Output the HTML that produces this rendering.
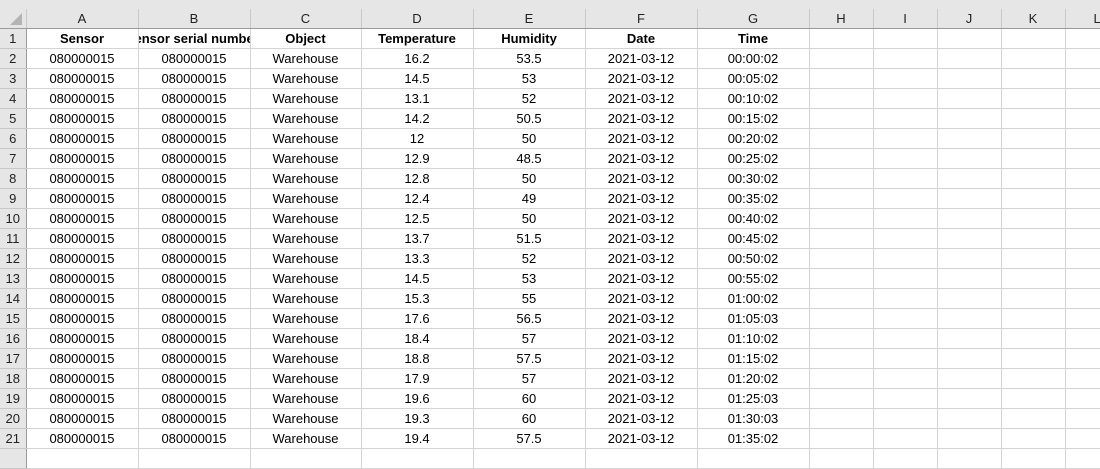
<!DOCTYPE html>
<html><head><style>
body{margin:0;width:1100px;height:451px;overflow:hidden;background:#fff;font-family:"Liberation Sans",Arial,sans-serif;}
.top{position:absolute;left:0;top:0;width:1100px;height:9px;background:#e6e6e6;}
table{position:absolute;left:0;top:9px;width:1105px;border-collapse:collapse;table-layout:fixed;font-size:13px;color:#000;}
td{height:19px;padding:0;text-align:center;border-right:1px solid #d4d4d4;border-bottom:1px solid #d4d4d4;white-space:nowrap;overflow:hidden;line-height:19px;}
tr.h td{background:#e6e6e6;border-right:1px solid #c8c8c8;border-bottom:1px solid #9b9b9b;color:#222;height:19px;}
td.rh{background:#e6e6e6;border-right:1px solid #9b9b9b;border-bottom:1px solid #c8c8c8;color:#222;text-align:center;}
tr.b td{font-weight:bold;}
tr.b td.rh{font-weight:normal;}
.clip{position:relative;}
.clip span{position:absolute;left:-4px;top:0;width:130px;text-align:left;}
</style></head><body>
<div class="top"></div>
<table>
<colgroup><col style="width:26px"><col style="width:112px"><col style="width:112px"><col style="width:111px"><col style="width:112px"><col style="width:112px"><col style="width:112px"><col style="width:112px"><col style="width:64px"><col style="width:64px"><col style="width:64px"><col style="width:64px"><col style="width:40px"></colgroup>
<tr class="h"><td class="rh" style="border-bottom:1px solid #9b9b9b"><svg width="26" height="19" style="display:block"><polygon points="22,4 22,16 10,16" fill="#b4b4b4"/></svg></td><td>A</td><td>B</td><td>C</td><td>D</td><td>E</td><td>F</td><td>G</td><td>H</td><td>I</td><td>J</td><td>K</td><td style="text-align:left;padding-left:28px">L</td></tr>
<tr class="b"><td class="rh">1</td><td>Sensor</td><td class="clip"><span>ensor serial number</span></td><td>Object</td><td>Temperature</td><td>Humidity</td><td>Date</td><td>Time</td><td></td><td></td><td></td><td></td><td></td></tr>
<tr><td class="rh">2</td><td>080000015</td><td>080000015</td><td>Warehouse</td><td>16.2</td><td>53.5</td><td>2021-03-12</td><td>00:00:02</td><td></td><td></td><td></td><td></td><td></td></tr>
<tr><td class="rh">3</td><td>080000015</td><td>080000015</td><td>Warehouse</td><td>14.5</td><td>53</td><td>2021-03-12</td><td>00:05:02</td><td></td><td></td><td></td><td></td><td></td></tr>
<tr><td class="rh">4</td><td>080000015</td><td>080000015</td><td>Warehouse</td><td>13.1</td><td>52</td><td>2021-03-12</td><td>00:10:02</td><td></td><td></td><td></td><td></td><td></td></tr>
<tr><td class="rh">5</td><td>080000015</td><td>080000015</td><td>Warehouse</td><td>14.2</td><td>50.5</td><td>2021-03-12</td><td>00:15:02</td><td></td><td></td><td></td><td></td><td></td></tr>
<tr><td class="rh">6</td><td>080000015</td><td>080000015</td><td>Warehouse</td><td>12</td><td>50</td><td>2021-03-12</td><td>00:20:02</td><td></td><td></td><td></td><td></td><td></td></tr>
<tr><td class="rh">7</td><td>080000015</td><td>080000015</td><td>Warehouse</td><td>12.9</td><td>48.5</td><td>2021-03-12</td><td>00:25:02</td><td></td><td></td><td></td><td></td><td></td></tr>
<tr><td class="rh">8</td><td>080000015</td><td>080000015</td><td>Warehouse</td><td>12.8</td><td>50</td><td>2021-03-12</td><td>00:30:02</td><td></td><td></td><td></td><td></td><td></td></tr>
<tr><td class="rh">9</td><td>080000015</td><td>080000015</td><td>Warehouse</td><td>12.4</td><td>49</td><td>2021-03-12</td><td>00:35:02</td><td></td><td></td><td></td><td></td><td></td></tr>
<tr><td class="rh">10</td><td>080000015</td><td>080000015</td><td>Warehouse</td><td>12.5</td><td>50</td><td>2021-03-12</td><td>00:40:02</td><td></td><td></td><td></td><td></td><td></td></tr>
<tr><td class="rh">11</td><td>080000015</td><td>080000015</td><td>Warehouse</td><td>13.7</td><td>51.5</td><td>2021-03-12</td><td>00:45:02</td><td></td><td></td><td></td><td></td><td></td></tr>
<tr><td class="rh">12</td><td>080000015</td><td>080000015</td><td>Warehouse</td><td>13.3</td><td>52</td><td>2021-03-12</td><td>00:50:02</td><td></td><td></td><td></td><td></td><td></td></tr>
<tr><td class="rh">13</td><td>080000015</td><td>080000015</td><td>Warehouse</td><td>14.5</td><td>53</td><td>2021-03-12</td><td>00:55:02</td><td></td><td></td><td></td><td></td><td></td></tr>
<tr><td class="rh">14</td><td>080000015</td><td>080000015</td><td>Warehouse</td><td>15.3</td><td>55</td><td>2021-03-12</td><td>01:00:02</td><td></td><td></td><td></td><td></td><td></td></tr>
<tr><td class="rh">15</td><td>080000015</td><td>080000015</td><td>Warehouse</td><td>17.6</td><td>56.5</td><td>2021-03-12</td><td>01:05:03</td><td></td><td></td><td></td><td></td><td></td></tr>
<tr><td class="rh">16</td><td>080000015</td><td>080000015</td><td>Warehouse</td><td>18.4</td><td>57</td><td>2021-03-12</td><td>01:10:02</td><td></td><td></td><td></td><td></td><td></td></tr>
<tr><td class="rh">17</td><td>080000015</td><td>080000015</td><td>Warehouse</td><td>18.8</td><td>57.5</td><td>2021-03-12</td><td>01:15:02</td><td></td><td></td><td></td><td></td><td></td></tr>
<tr><td class="rh">18</td><td>080000015</td><td>080000015</td><td>Warehouse</td><td>17.9</td><td>57</td><td>2021-03-12</td><td>01:20:02</td><td></td><td></td><td></td><td></td><td></td></tr>
<tr><td class="rh">19</td><td>080000015</td><td>080000015</td><td>Warehouse</td><td>19.6</td><td>60</td><td>2021-03-12</td><td>01:25:03</td><td></td><td></td><td></td><td></td><td></td></tr>
<tr><td class="rh">20</td><td>080000015</td><td>080000015</td><td>Warehouse</td><td>19.3</td><td>60</td><td>2021-03-12</td><td>01:30:03</td><td></td><td></td><td></td><td></td><td></td></tr>
<tr><td class="rh">21</td><td>080000015</td><td>080000015</td><td>Warehouse</td><td>19.4</td><td>57.5</td><td>2021-03-12</td><td>01:35:02</td><td></td><td></td><td></td><td></td><td></td></tr>
<tr><td class="rh"></td><td></td><td></td><td></td><td></td><td></td><td></td><td></td><td></td><td></td><td></td><td></td><td></td></tr>
</table>
</body></html>
